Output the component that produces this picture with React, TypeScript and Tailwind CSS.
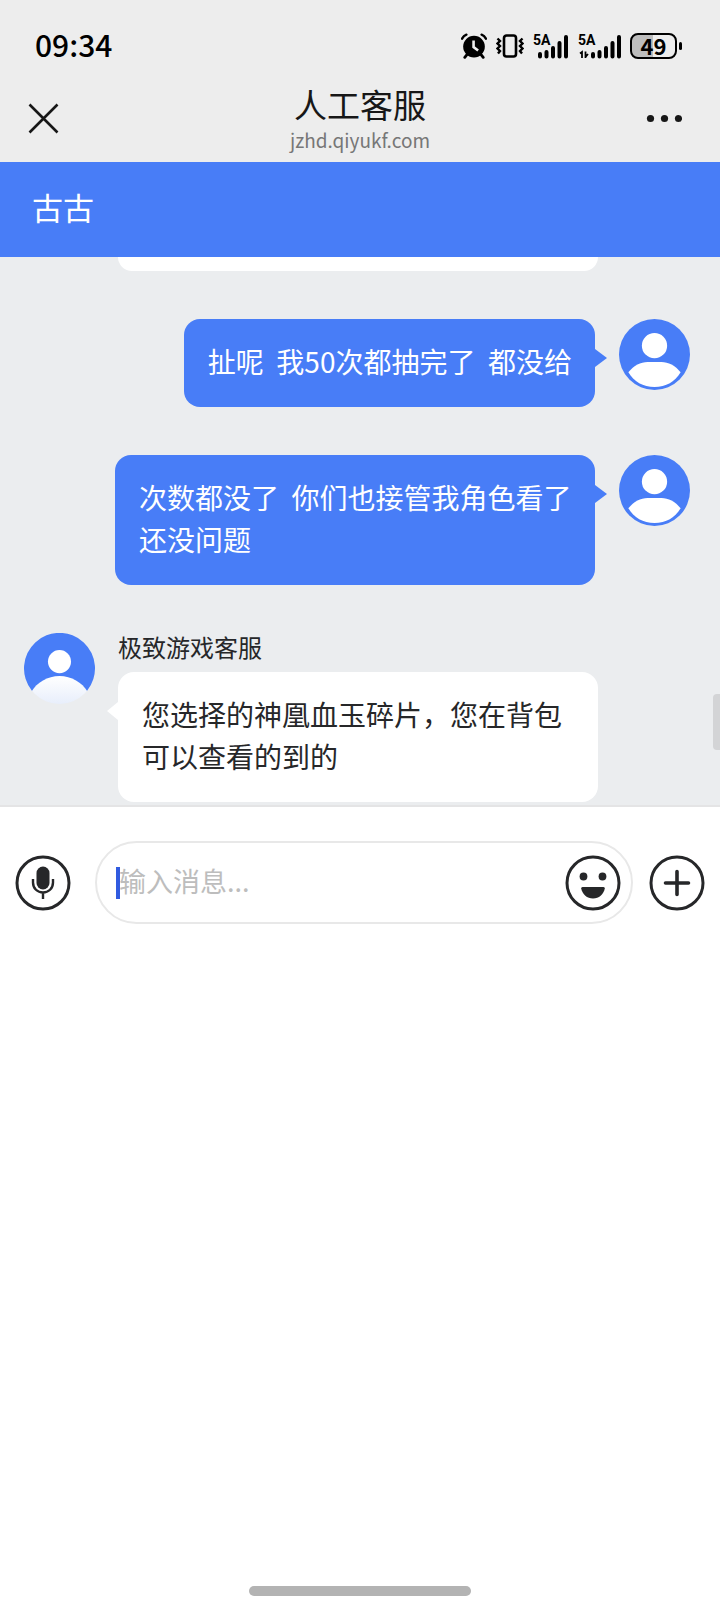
import { useId, type ReactNode } from "react";

function AlarmIcon() {
  return (
    <svg className="h-[26px] w-[26px]" viewBox="0 0 24 24" fill="none" aria-hidden="true">
      <circle cx="12" cy="12.500" r="10" fill="#000" />
      <path d="M5.500 20L3.500 22.500M18.500 20L20.500 22.500" stroke="#000" strokeWidth="2.600" strokeLinecap="round" />
      <path d="M1 5.200Q2.400 2.600 5 1.600M23 5.200Q21.600 2.600 19 1.600" stroke="#000" strokeWidth="2.200" strokeLinecap="round" />
      <path d="M11.600 7V13L15.800 16.200" stroke="#ededed" strokeWidth="2.400" />
    </svg>
  );
}

function VibrateIcon() {
  return (
    <svg className="h-6 w-7" viewBox="0 0 28 24" fill="none" stroke="#000" aria-hidden="true">
      <rect x="8" y="1.500" width="12" height="21" rx="2.500" strokeWidth="2.600" />
      <path d="M1.500 4.500L4 7L1.500 9.500L4 12L1.500 14.500L4 17L2 19.500" strokeWidth="2.400" />
      <path d="M26.500 4.500L24 7L26.500 9.500L24 12L26.500 14.500L24 17L26 19.500" strokeWidth="2.400" />
    </svg>
  );
}

function SignalIcon({ data }: { data?: boolean }) {
  return (
    <div className="relative pt-px">
      <span className="absolute -top-0.5 left-0 font-[Roboto,sans-serif] text-sm leading-4 font-bold text-black">5A</span>
      {data ? (
        <svg className="h-6 w-[43px]" viewBox="0 0 43 24" fill="none" stroke="#000" aria-hidden="true">
          <path d="M2 18.500L4 17V23M7.500 16.500V23M7.500 22L10 19" strokeWidth="1.800" />
          <path d="M15 19V21.500M21.500 17V21.500M28 13V21.500M34.500 8V21.500M41 2V21.500" strokeWidth="4" strokeLinecap="round" />
        </svg>
      ) : (
        <svg className="h-6 w-9" viewBox="0 0 36 24" fill="none" stroke="#000" aria-hidden="true">
          <path d="M7 19V21.500M13.500 17V21.500M20 13V21.500M26.500 8V21.500M33 2V21.500" strokeWidth="4" strokeLinecap="round" />
        </svg>
      )}
    </div>
  );
}

function Battery() {
  return (
    <div className="flex items-center gap-0.5">
      <div className="flex h-[26px] w-[47px] items-center justify-center rounded-lg border-2 border-black bg-linear-to-r from-[#bdbdbd] from-50% to-transparent to-50% pb-0.5 font-['Noto_Sans_CJK_SC',sans-serif] text-[22px] leading-[22px] font-bold text-black">
        49
      </div>
      <div className="h-2 w-[3px] rounded-sm bg-black" />
    </div>
  );
}

function Avatar({ agent }: { agent?: boolean }) {
  const id = useId();
  return (
    <svg className="size-[71px] shrink-0" viewBox="0 0 72 72" aria-hidden="true">
      {agent ? (
        <>
          <defs>
            <clipPath id={id + "c"}>
              <circle cx="36" cy="36" r="36" />
            </clipPath>
            <linearGradient id={id + "g"} x1="0" y1="0" x2="0" y2="1">
              <stop offset="0" stopColor="#fff" />
              <stop offset="1" stopColor="#e6edfb" />
            </linearGradient>
          </defs>
          <path d="M8 58.500A36 36 0 1 1 64 58.500Z" fill="#487df7" />
          <circle cx="36" cy="29" r="11.700" fill="#fff" />
          <path clipPath={`url(#${id}c)`} d="M7.500 59.500C13 50 24 43.500 36 43.500S59 50 64.500 59.500L60 74H12Z" fill={`url(#${id}g)`} />
        </>
      ) : (
        <>
          <circle cx="36" cy="36" r="36" fill="#487df7" />
          <circle cx="36" cy="27" r="12.800" fill="#fff" />
          <path d="M9.500 54C15 47 22 43.500 29 43.500H43C50 43.500 57 47 62.500 54C57 63.500 47.500 69 36 69S15 63.500 9.500 54Z" fill="#fff" />
        </>
      )}
    </svg>
  );
}

function Sent({ children }: { children: ReactNode }) {
  return (
    <li className="flex items-start justify-end gap-3 pr-[30px] pl-[115px]">
      <div className="flex items-start">
        <p className="rounded-2xl bg-[#487df7] pt-[21px] pr-[23px] pb-[25px] pl-6 text-[28px] leading-[42px] whitespace-pre-wrap text-white">{children}</p>
        <svg className="mt-[30px] h-[18px] w-3 shrink-0" viewBox="0 0 12 18" aria-hidden="true">
          <path d="M0 0L12 9L0 18Z" fill="#487df7" />
        </svg>
      </div>
      <Avatar />
    </li>
  );
}

function Received({ name, children }: { name: string; children: ReactNode }) {
  return (
    <li className="flex items-start gap-3 pr-[122px] pl-6">
      <Avatar agent />
      <div className="min-w-0 flex-1">
        <h2 className="pb-[11px] pl-[11px] text-2xl leading-7 text-[#262729]">{name}</h2>
        <div className="flex items-start">
          <svg className="mt-[30px] h-[18px] w-[11px] shrink-0" viewBox="0 0 11 18" aria-hidden="true">
            <path d="M11 0L0 9L11 18Z" fill="#fff" />
          </svg>
          <p className="flex-1 rounded-2xl bg-white px-6 pt-[21px] pb-[25px] text-[28px] leading-[42px] text-[#262729]">{children}</p>
        </div>
      </div>
    </li>
  );
}

export default function App() {
  return (
    <div className="flex min-h-screen flex-col bg-white font-['Noto_Sans_CJK_SC',sans-serif]">
      <header className="bg-[#ededed]">
        <div className="flex h-[76px] items-center justify-between pt-4 pr-[38px] pl-[35px]">
          <time className="pb-1 text-3xl font-medium text-black">09:34</time>
          <div className="flex items-center gap-[9px]">
            <AlarmIcon />
            <VibrateIcon />
            <SignalIcon />
            <SignalIcon data />
            <Battery />
          </div>
        </div>
        <div className="grid h-[86px] grid-cols-[1fr_auto_1fr] items-center px-[26px]">
          <button type="button" aria-label="关闭" className="justify-self-start">
            <svg className="h-9 w-9" viewBox="0 0 36 36" fill="none" stroke="#171717" strokeWidth="2.600" aria-hidden="true">
              <path d="M3.500 3.500L31.500 31.500M31.500 3.500L3.500 31.500" />
            </svg>
          </button>
          <div className="text-center">
            <h1 className="text-[33px] leading-10 text-[#171717]">人工客服</h1>
            <p className="pt-0.5 pb-px text-[19px] leading-7 text-[#777]">jzhd.qiyukf.com</p>
          </div>
          <button type="button" aria-label="更多" className="justify-self-end pr-3">
            <svg className="h-9 w-9" viewBox="0 0 36 36" fill="#171717" aria-hidden="true">
              <circle cx="4.500" cy="17.500" r="3.600" />
              <circle cx="18.500" cy="17.500" r="3.600" />
              <circle cx="32.500" cy="17.500" r="3.600" />
            </svg>
          </button>
        </div>
      </header>

      <div className="flex h-[95px] items-center bg-[#487df7] px-8 pb-1 text-[31px] text-white">古古</div>

      <main className="relative border-b-2 border-[#e4e4e5] bg-[#ebedef] pb-[3px]">
        <ul className="flex flex-col gap-12">
          <li className="pr-[122px] pl-[118px]">
            <div className="h-3.5 rounded-b-2xl bg-white" />
          </li>
          <Sent>扯呢  我50次都抽完了  都没给</Sent>
          <Sent>次数都没了  你们也接管我角色看了还没问题</Sent>
          <Received name="极致游戏客服">您选择的神凰血玉碎片，您在背包可以查看的到的</Received>
        </ul>
        <div className="absolute right-0 bottom-[55px] h-14 w-[7px] rounded-l-sm bg-[#d3d4d6]" />
      </main>

      <form className="flex items-center gap-4 px-[15px] pt-[34px]">
        <button type="button" aria-label="语音" className="mr-2 shrink-0">
          <svg className="size-14" viewBox="0 0 56 56" fill="none" stroke="#262729" aria-hidden="true">
            <circle cx="28" cy="28" r="26" strokeWidth="3" />
            <rect x="21.500" y="11.500" width="13" height="23" rx="6.500" fill="#262729" stroke="none" />
            <path d="M18 24V27.500C18 33.500 22.500 37.500 28 37.500S38 33.500 38 27.500V24M28 37.500V44" strokeWidth="2.400" />
          </svg>
        </button>
        <div className="flex h-[83px] min-w-0 flex-1 items-center rounded-full border-2 border-[#e8e8e8] pr-2.5 pl-[19px]">
          <div className="h-8 w-1 shrink-0 bg-[#315be0]" />
          <input
            type="text"
            aria-label="输入消息"
            placeholder="输入消息..."
            className="-ml-px h-12 min-w-0 flex-1 bg-transparent pb-1 text-[27px] text-[#262729] outline-none placeholder:text-[#bdbdbd]"
          />
          <button type="button" aria-label="表情" className="shrink-0">
            <svg className="size-14" viewBox="0 0 56 56" fill="#262729" aria-hidden="true">
              <circle cx="28" cy="28" r="26" fill="none" stroke="#262729" strokeWidth="3" />
              <circle cx="18.500" cy="21.500" r="3.900" />
              <circle cx="37.500" cy="21.500" r="3.900" />
              <path d="M17.500 32H38.500Q40 32 39.800 33.500C38.500 39.500 34 43.500 28 43.500S17.500 39.500 16.200 33.500Q16 32 17.500 32Z" />
            </svg>
          </button>
        </div>
        <button type="button" aria-label="添加" className="shrink-0">
          <svg className="size-14" viewBox="0 0 56 56" fill="none" stroke="#262729" aria-hidden="true">
            <circle cx="28" cy="28" r="26" strokeWidth="3" />
            <path d="M28 16.500V39.500M16.500 28H39.500" strokeWidth="3.600" strokeLinecap="round" />
          </svg>
        </button>
      </form>

      <div className="mx-auto mt-auto mb-[11px] h-2.5 w-[222px] rounded-full bg-[#b3b3b3]" />
    </div>
  );
}
